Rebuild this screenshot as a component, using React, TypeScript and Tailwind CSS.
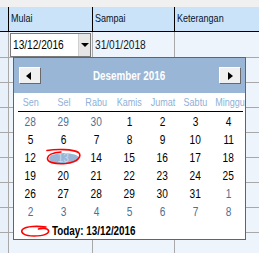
const font = "font-['Liberation_Sans',Arial,sans-serif]"

const weekDays = ['Sen', 'Sel', 'Rabu', 'Kamis', 'Jumat', 'Sabtu', 'Minggu']

type Day = { n: number; other?: boolean; selected?: boolean }

const weeks: Day[][] = [
  [{ n: 28, other: true }, { n: 29, other: true }, { n: 30, other: true }, { n: 1 }, { n: 2 }, { n: 3 }, { n: 4 }],
  [{ n: 5 }, { n: 6 }, { n: 7 }, { n: 8 }, { n: 9 }, { n: 10 }, { n: 11 }],
  [{ n: 12 }, { n: 13, selected: true }, { n: 14 }, { n: 15 }, { n: 16 }, { n: 17 }, { n: 18 }],
  [{ n: 19 }, { n: 20 }, { n: 21 }, { n: 22 }, { n: 23 }, { n: 24 }, { n: 25 }],
  [{ n: 26 }, { n: 27 }, { n: 28 }, { n: 29 }, { n: 30 }, { n: 31 }, { n: 1, other: true }],
  [2, 3, 4, 5, 6, 7, 8].map((n) => ({ n, other: true })),
]

// the old grid draws with a narrow face, so squeeze the text sideways
function Narrow({ children, left, tight }: { children: React.ReactNode; left?: boolean; tight?: boolean }) {
  return (
    <span
      className={`inline-block whitespace-nowrap ${tight ? 'scale-x-[0.78]' : 'scale-x-[0.82]'} ${
        left ? 'origin-left' : 'origin-center'
      }`}
    >
      {children}
    </span>
  )
}

function NavButton({ dir }: { dir: 'left' | 'right' }) {
  return (
    <button className="w-[22px] h-[17px] flex items-center justify-center bg-[#f0f0f0] border border-t-white border-l-white border-r-[#696969] border-b-[#696969]">
      {dir === 'left' ? (
        <span className="block w-0 h-0 mr-[3px] border-y-[4px] border-y-transparent border-r-[5px] border-r-black" />
      ) : (
        <span className="block w-0 h-0 ml-[1px] border-y-[4px] border-y-transparent border-l-[5px] border-l-black" />
      )}
    </button>
  )
}

function DatePopup() {
  return (
    <div className="absolute left-[13px] top-[57px] w-[233px] h-[183px] bg-white border border-[#646464] flex flex-col">
      {/* Month header */}
      <div className="relative h-[35px] bg-[#9ab6d6] flex items-center justify-between pl-[5px] pr-[4px]">
        <NavButton dir="left" />
        <span className="absolute inset-x-0 text-center text-white font-bold text-[12px]">
          <Narrow>Desember 2016</Narrow>
        </span>
        <NavButton dir="right" />
      </div>

      {/* Weekday names */}
      <div className="grid grid-cols-7 h-[18px] items-center text-[11px] text-[#8fb0d8]">
        {weekDays.map((d) => (
          <span key={d} className="text-center">
            <Narrow>{d}</Narrow>
          </span>
        ))}
      </div>
      <div className="h-px bg-black ml-[4px] mr-[2px]" />

      {/* Days */}
      <div className="grid grid-cols-7 mt-px">
        {weeks.flat().map((d, i) => (
          <div key={i} className="h-[18px] flex items-center justify-center text-[13px]">
            {d.selected ? (
              <span className="w-[30px] h-[11px] rounded-[50%] bg-[#9ab6d6] text-[#c8d8ec] flex items-center justify-center">
                <Narrow tight>{d.n}</Narrow>
              </span>
            ) : (
              <span className={d.other ? 'text-[#4f6f94]' : 'text-black'}>
                <Narrow tight>{d.n}</Narrow>
              </span>
            )}
          </div>
        ))}
      </div>

      {/* Today */}
      <div className="flex items-center h-[18px] pl-[6px] pt-[2px]">
        <svg width="30" height="12" viewBox="0 0 30 12" fill="none">
          <path
            d="M26 2 C18 1 6 1 2.5 4.5 C0 7.5 4 11 14 11 C24 11 29.5 8.5 28.5 5.5 C27.5 3 22 3 18.5 4"
            stroke="#ff0000"
            strokeWidth="1.6"
            strokeLinecap="round"
          />
        </svg>
        <span className="ml-[2px] font-bold text-[12px] text-black">
          <Narrow left>Today: 13/12/2016</Narrow>
        </span>
      </div>

      {/* Red mark round the selected day */}
      <svg className="absolute left-[32px] top-[90px]" width="36" height="18" viewBox="0 0 36 18" fill="none">
        <path
          d="M1 2.5 C10 1 27 1 32.5 4.5 C36 7.5 33 14 20 15.5 C8 16.5 1 14 1.5 10 C2 6.5 8 4.5 15 4"
          stroke="#ff0000"
          strokeWidth="1.6"
          strokeLinecap="round"
        />
      </svg>
    </div>
  )
}

function Row({ first }: { first?: boolean }) {
  return (
    <div className={`flex border-b border-[#a8a8a8] ${first ? 'h-[26px]' : 'h-[25px]'}`}>
      <div className="w-[9px] shrink-0 border-r border-[#a8a8a8] bg-[#e8f0f9]" />
      <div className="w-[84px] shrink-0 border-r border-[#a8a8a8]">
        {first && (
          <div className="ml-px mt-px w-[81px] h-[24px] bg-white border border-[#7a7a7a] flex items-center">
            <span className="flex-1 pl-[2px] text-[13px] text-black">
              <Narrow left tight>13/12/2016</Narrow>
            </span>
            <div className="w-[16px] h-full bg-[#e6e6e6] border-l border-[#d0d0d0] flex items-center justify-center">
              <span className="block w-0 h-0 border-x-[4px] border-x-transparent border-t-[4px] border-t-black" />
            </div>
          </div>
        )}
      </div>
      <div className="w-[82px] shrink-0 border-r border-[#a8a8a8] flex items-center pl-[2px]">
        {first && (
          <span className="text-[13px] text-[#101828]">
            <Narrow left tight>31/01/2018</Narrow>
          </span>
        )}
      </div>
      <div className="flex-1" />
    </div>
  )
}

export default function App() {
  return (
    <div className={`relative w-[259px] h-[253px] overflow-hidden bg-[#eef4fc] ${font}`}>
      <div className="h-[7px] bg-[#f0f0f0]" />

      {/* Column headers */}
      <div className="flex h-[25px] bg-[#cbe3f9] border-b border-black text-[11px] text-[#0a1428]">
        <div className="w-[9px] shrink-0 border-r border-black" />
        <div className="w-[84px] shrink-0 border-r border-black flex items-center pl-[2px] pb-[2px]">
          <Narrow left>Mulai</Narrow>
        </div>
        <div className="w-[82px] shrink-0 border-r border-black flex items-center pl-[2px] pb-[2px]">
          <Narrow left>Sampai</Narrow>
        </div>
        <div className="flex-1 flex items-center pl-[2px] pb-[2px]">
          <Narrow left>Keterangan</Narrow>
        </div>
      </div>

      <Row first />
      {Array.from({ length: 8 }).map((_, i) => (
        <Row key={i} />
      ))}

      <DatePopup />
    </div>
  )
}
